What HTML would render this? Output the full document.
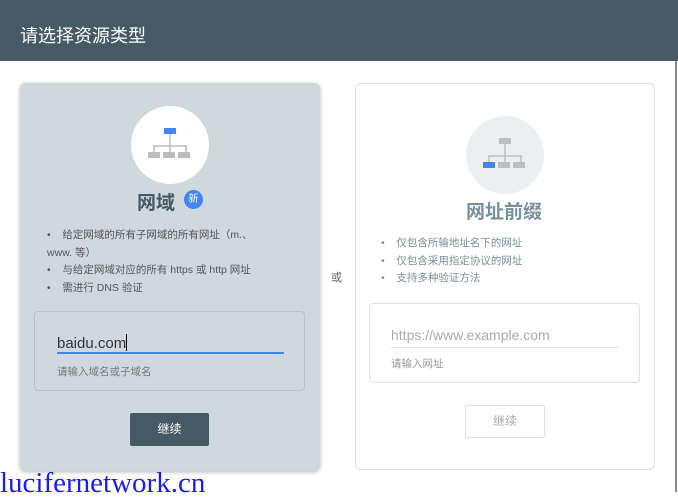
<!DOCTYPE html>
<html><head><meta charset="utf-8"><style>
*{margin:0;padding:0;box-sizing:border-box}
body{width:678px;height:492px;overflow:hidden;background:#fff;font-family:"Liberation Sans","Noto Sans CJK SC",sans-serif;position:relative}
.hdr{position:absolute;left:0;top:0;width:678px;height:61px;background:#455a64;color:#fff;font-size:18px;padding:22px 0 0 20px}
.edge{position:absolute;left:675px;top:61px;width:2px;height:431px;background:#888}
.card{position:absolute;border-radius:6px}
.c1{left:20px;top:83px;width:300px;height:388px;background:#cfd8dc;box-shadow:0 1px 4px rgba(0,0,0,.3)}
.c2{left:355px;top:83px;width:300px;height:387px;background:#fff;border:1px solid #e0e0e0}
.circ{position:absolute;width:78px;height:78px;border-radius:50%}
.ab{position:absolute}
.t{position:absolute;white-space:nowrap}
</style></head><body>
<div class="hdr">请选择资源类型</div>
<div class="edge"></div>

<div class="card c1">
 <div class="circ" style="left:111px;top:23px;background:#fff">
  <svg width="78" height="78" viewBox="0 0 78 78">
   <rect x="33" y="22" width="12" height="6" fill="#4285f4"/>
   <path d="M39 28v12M23 40v6M39 40v6M55 40v6M22 40h34" stroke="#bdbdbd" stroke-width="1.5" fill="none"/>
   <rect x="17" y="46" width="12" height="6" fill="#bdbdbd"/><rect x="32" y="46" width="12" height="6" fill="#bdbdbd"/><rect x="47" y="46" width="12" height="6" fill="#bdbdbd"/>
  </svg>
 </div>
 <div class="t" style="left:117px;top:105px;font-size:19px;font-weight:bold;color:#455a64">网域</div>
 <div class="ab" style="left:164px;top:107px;width:19px;height:19px;border-radius:50%;background:#4285f4;color:#fff;font-size:10px;text-align:center;line-height:19px">新</div>
 <div class="t" style="left:27px;top:144px;font-size:10.5px;color:#555;line-height:17.5px;white-space:normal;width:226px">•&nbsp;&nbsp;&nbsp;&nbsp;给定网域的所有子网域的所有网址（m.、www. 等）<br>•&nbsp;&nbsp;&nbsp;&nbsp;与给定网域对应的所有 https 或 http 网址<br>•&nbsp;&nbsp;&nbsp;&nbsp;需进行 DNS 验证</div>
 <div class="ab" style="left:14px;top:228px;width:271px;height:80px;border:1px solid #b9c2c6;border-radius:4px"></div>
 <div class="t" style="left:37px;top:251px;font-size:15px;color:#333">baidu.com<span style="display:inline-block;width:1px;height:17px;background:#000;vertical-align:-3px"></span></div>
 <div class="ab" style="left:37px;top:269px;width:227px;height:2px;background:#4285f4"></div>
 <div class="t" style="left:37px;top:281px;font-size:10.5px;color:#777">请输入域名或子域名</div>
 <div class="ab" style="left:110px;top:330px;width:79px;height:33px;background:#455a64;border-radius:2px;color:#fff;font-size:12px;text-align:center;line-height:33px">继续</div>
</div>

<div class="t" style="left:331px;top:269px;font-size:11px;color:#666">或</div>

<div class="card c2">
 <div class="circ" style="left:110px;top:32px;background:#eceff1">
  <svg width="78" height="78" viewBox="0 0 78 78">
   <rect x="33" y="22" width="12" height="6" fill="#bdbdbd"/>
   <path d="M39 28v12M23 40v6M39 40v6M55 40v6M22 40h34" stroke="#bdbdbd" stroke-width="1.5" fill="none"/>
   <rect x="17" y="46" width="12" height="6" fill="#4285f4"/><rect x="32" y="46" width="12" height="6" fill="#bdbdbd"/><rect x="47" y="46" width="12" height="6" fill="#bdbdbd"/>
  </svg>
 </div>
 <div class="t" style="left:110px;top:113px;font-size:19px;font-weight:bold;color:#78909c">网址前缀</div>
 <div class="t" style="left:25px;top:151px;font-size:10.5px;color:#78909c;line-height:17.5px">•&nbsp;&nbsp;&nbsp;&nbsp;仅包含所输地址名下的网址<br>•&nbsp;&nbsp;&nbsp;&nbsp;仅包含采用指定协议的网址<br>•&nbsp;&nbsp;&nbsp;&nbsp;支持多种验证方法</div>
 <div class="ab" style="left:13px;top:219px;width:271px;height:80px;border:1px solid #e0e0e0;border-radius:4px"></div>
 <div class="t" style="left:35px;top:243px;font-size:14px;color:#aaa">https://www.example.com</div>
 <div class="ab" style="left:35px;top:263px;width:228px;height:1px;background:#e6e6e6"></div>
 <div class="t" style="left:35px;top:272px;font-size:10.5px;color:#999">请输入网址</div>
 <div class="ab" style="left:109px;top:321px;width:80px;height:33px;border:1px solid #e0e0e0;border-radius:2px;color:#aaa;font-size:12px;text-align:center;line-height:31px">继续</div>
</div>

<div class="t" style="left:0;top:467px;font-family:'Liberation Serif',serif;font-size:29px;color:#1a1aff">lucifernetwork.cn</div>
</body></html>
